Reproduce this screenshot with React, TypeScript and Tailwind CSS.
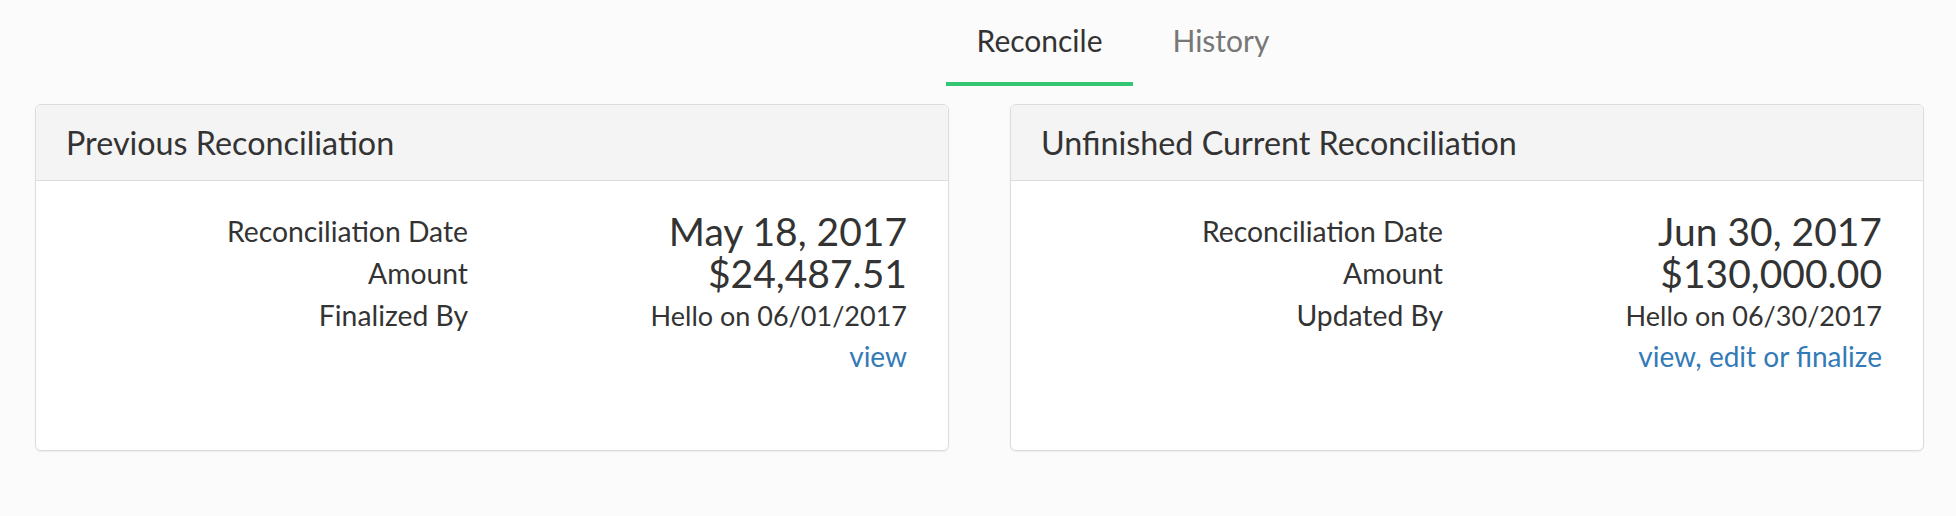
import React from "react";

type Row = { label?: string; value: React.ReactNode; size: "big" | "small" | "link"; h: string };

interface ReconCardProps {
  title: string;
  rows: Row[];
}

const valueClass = {
  big: "w-[439px] text-right text-[39px] leading-[41px] text-[#333]",
  small: "w-[439px] text-right text-[27px] leading-[41px] text-[#333]",
  link: "w-[439px] text-right text-[28px] leading-[41px] text-[#333]",
};

const ReconCard: React.FC<ReconCardProps> = ({ title, rows }) => {
  return (
    <div className="flex-1 rounded-[6px] border border-[#dcdcdc] bg-white shadow-[0_1px_2px_rgba(0,0,0,0.06)] overflow-hidden">
      <div className="h-[76px] border-b border-[#dcdcdc] bg-[#f4f4f4] px-[30px] text-[32.3px] leading-[75px] text-[#333]">
        {title}
      </div>
      <div className="h-[269px] pt-[30px]">
        {rows.map((row, i) => (
          <div key={i} className={"flex items-center " + row.h}>
            <div className="w-[432px] text-right text-[28.3px] text-[#333]">
              {row.label}
            </div>
            <div className={valueClass[row.size]}>{row.value}</div>
          </div>
        ))}
      </div>
    </div>
  );
};

const Link: React.FC<{ children: React.ReactNode }> = ({ children }) => (
  <a href="#" className="text-[#337ab7] hover:underline">
    {children}
  </a>
);

export default function App() {
  return (
    <div
      className="min-h-[516px] w-full bg-[#fbfbfb]"
      style={{ fontFamily: "Lato, 'Open Sans', sans-serif" }}
    >
      {/* tabs */}
      <div className="flex justify-center pl-[290px]">
        <div className="flex gap-[8px]">
          <button className="border-b-4 border-[#33c572] px-[31px] pt-[22px] pb-[24px] text-[30px] leading-[36px] text-[#333]">
            Reconcile
          </button>
          <button className="border-b-4 border-transparent px-[31px] pt-[22px] pb-[24px] text-[30px] leading-[36px] text-[#777]">
            History
          </button>
        </div>
      </div>

      <div className="flex gap-[61px] pl-[35px] pr-[32px] pt-[18px]">
        <ReconCard
          title="Previous Reconciliation"
          rows={[
            { label: "Reconciliation Date", value: "May 18, 2017", size: "big", h: "h-[41px]" },
            { label: "Amount", value: "$24,487.51", size: "big", h: "h-[42px]" },
            { label: "Finalized By", value: "Hello on 06/01/2017", size: "small", h: "h-[42px]" },
            { value: <Link>view</Link>, size: "link", h: "h-[41px]" },
          ]}
        />
        <ReconCard
          title="Unfinished Current Reconciliation"
          rows={[
            { label: "Reconciliation Date", value: "Jun 30, 2017", size: "big", h: "h-[41px]" },
            { label: "Amount", value: "$130,000.00", size: "big", h: "h-[42px]" },
            { label: "Updated By", value: "Hello on 06/30/2017", size: "small", h: "h-[42px]" },
            { value: <Link>view, edit or finalize</Link>, size: "link", h: "h-[41px]" },
          ]}
        />
      </div>
    </div>
  );
}
